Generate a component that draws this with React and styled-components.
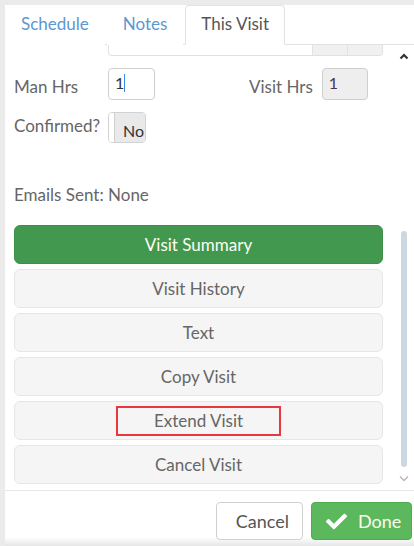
import React from "react";
import styled, { createGlobalStyle } from "styled-components";
import { FaCheck } from "react-icons/fa";

const Global = createGlobalStyle`
  html, body { margin: 0; padding: 0; background: #ebebeb; }
  body { font-family: Lato, "Open Sans", Arial, sans-serif; }
  * { box-sizing: border-box; }
`;

const Frame = styled.div`
  width: 414px;
  height: 546px;
  padding: 5px 0 0 5px;
  background: #ebebeb;
  display: flex;
  flex-direction: column;
  overflow: hidden;
`;

const Dialog = styled.div`
  flex: 1;
  display: flex;
  flex-direction: column;
  background: #fff;
  min-height: 0;
`;

const TabBar = styled.div`
  height: 40px;
  display: flex;
  align-items: flex-end;
  border-bottom: 1px solid #e2e2e2;
  background: #fff;
`;

const Tab = styled.div`
  height: 40px;
  margin-bottom: -1px;
  margin-right: 2px;
  padding: 0 15px 4px;
  display: flex;
  align-items: center;
  font-size: 17px;
  color: ${(p) => (p.$active ? "#555" : "#5b97d3")};
  background: #fff;
  border: 1px solid ${(p) => (p.$active ? "#e2e2e2" : "transparent")};
  border-bottom-color: ${(p) => (p.$active ? "#fff" : "transparent")};
  border-radius: 4px 4px 0 0;
`;

const Body = styled.div`
  height: 446px;
  display: grid;
  grid-template-columns: 1fr 31px;
  padding-left: 9px;
  border-bottom: 1px solid #e6e6e6;
  overflow: hidden;
`;

const Content = styled.div`
  display: flex;
  flex-direction: column;
`;

const ClippedField = styled.div`
  margin-left: 94px;
  height: 11px;
  border: 1px solid #e0e0e0;
  border-top: none;
  border-radius: 0 0 4px 4px;
  display: flex;
  justify-content: flex-end;
  overflow: hidden;
`;

const FieldAddon = styled.div`
  width: 35px;
  background: #f0f0f0;
  border-left: 1px solid #e2e2e2;
`;

const Row = styled.div`
  display: flex;
  align-items: center;
  margin-top: ${(p) => p.$top || 0}px;
`;

const Label = styled.span`
  font-size: 17px;
  color: #666;
  width: ${(p) => (p.$w ? `${p.$w}px` : "auto")};
  margin-left: ${(p) => p.$ml || 0}px;
  align-self: ${(p) => p.$self || "auto"};
  margin-top: ${(p) => p.$mt || 0}px;
`;

const Input = styled.div`
  width: ${(p) => p.$w}px;
  height: 32px;
  border: 1px solid #cfcfcf;
  border-radius: 4px;
  background: ${(p) => (p.$disabled ? "#eee" : "#fff")};
  font-size: 16px;
  color: ${(p) => (p.$disabled ? "#4a3550" : "#333")};
  padding: 4px 0 0 6px;
  margin-left: ${(p) => p.$ml || 0}px;
  display: flex;
  align-items: flex-start;
`;

const Caret = styled.span`
  width: 1px;
  height: 18px;
  margin-top: 1px;
  background: #3b8ee8;
`;

const Toggle = styled.div`
  width: 38px;
  height: 31px;
  border: 1px solid #d2d2d2;
  border-radius: 4px;
  display: flex;
  overflow: hidden;
`;

const ToggleHandle = styled.div`
  width: 6px;
  background: #fff;
  border-right: 1px solid #cfcfcf;
`;

const ToggleLabel = styled.div`
  flex: 1;
  background: #e9e9e9;
  font-size: 16px;
  color: #333;
  display: flex;
  align-items: center;
  justify-content: flex-end;
  padding: 5px 1px 0 0;
  overflow: hidden;
`;

const Emails = styled.div`
  font-size: 17px;
  line-height: 20px;
  color: #666;
  margin-top: 42px;
`;

const ActionList = styled.div`
  display: flex;
  flex-direction: column;
  gap: 5px;
  margin-top: 20px;
`;

const Action = styled.div`
  height: 39px;
  border-radius: 6px;
  border: 1px solid ${(p) => (p.$primary ? "#3f8e4a" : "#e6e6e6")};
  background: ${(p) => (p.$primary ? "#42984f" : "#f5f5f5")};
  color: ${(p) => (p.$primary ? "#fffdf2" : "#666")};
  font-size: 17px;
  display: flex;
  align-items: center;
  justify-content: center;
`;

const Highlight = styled.span`
  display: inline-flex;
  align-items: center;
  justify-content: center;
  height: 30px;
  padding: 0 36px;
  border: 2px solid #e8383d;
`;

const Scrollbar = styled.div`
  display: flex;
  flex-direction: column;
  align-items: center;
  padding-left: 10px;
`;

const Arrow = styled.svg`
  width: 10px;
  height: 7px;
  margin-top: ${(p) => p.$mt}px;
  flex: none;
`;

const Thumb = styled.div`
  width: 6px;
  height: 236px;
  margin-top: 171px;
  border-radius: 3px;
  background: #cdd7e0;
  flex: none;
`;

const Footer = styled.div`
  flex: 1;
  display: flex;
  justify-content: flex-end;
  align-items: flex-start;
  gap: 8px;
  padding: 11px 2px 0 0;
  background: linear-gradient(to bottom, #fff 0%, #fff 84%, #e6e6e6 100%);
`;

const FooterButton = styled.div`
  height: 38px;
  width: ${(p) => p.$w}px;
  border-radius: 4px;
  border: 1px solid ${(p) => (p.$primary ? "#4cae4c" : "#cfcfcf")};
  background: ${(p) => (p.$primary ? "#5cb85c" : "#fff")};
  color: ${(p) => (p.$primary ? "#fffdf0" : "#555")};
  font-size: 18px;
  display: flex;
  align-items: center;
  justify-content: ${(p) => (p.$primary ? "flex-start" : "flex-end")};
  gap: 11px;
  padding: ${(p) => (p.$primary ? "0 0 0 14px" : "0 13px 0 0")};
`;

const actions = ["Visit History", "Text", "Copy Visit", "Extend Visit", "Cancel Visit"];

export default function App() {
  return (
    <Frame>
      <Global />
      <Dialog>
        <TabBar>
          <Tab>Schedule</Tab>
          <Tab>Notes</Tab>
          <Tab $active>This Visit</Tab>
        </TabBar>
        <Body>
          <Content>
            <ClippedField>
              <FieldAddon />
              <FieldAddon />
            </ClippedField>
            <Row $top={12}>
              <Label $w={94} $mt={4}>Man Hrs</Label>
              <Input $w={47}>
                1<Caret />
              </Input>
              <Label $ml={94} $mt={4}>Visit Hrs</Label>
              <Input $w={46} $ml={9} $disabled>
                1
              </Input>
            </Row>
            <Row $top={12}>
              <Label $w={94} $self="flex-start" $mt={3}>Confirmed?</Label>
              <Toggle>
                <ToggleHandle />
                <ToggleLabel>No</ToggleLabel>
              </Toggle>
            </Row>
            <Emails>Emails Sent: None</Emails>
            <ActionList>
              <Action $primary>Visit Summary</Action>
              {actions.map((a) => (
                <Action key={a}>
                  {a === "Extend Visit" ? <Highlight>{a}</Highlight> : a}
                </Action>
              ))}
            </ActionList>
          </Content>
          <Scrollbar>
            <Arrow $mt={8} viewBox="0 0 10 7">
              <polyline points="1.5,5.5 5,2 8.5,5.5" fill="none" stroke="#333" strokeWidth="2.2" />
            </Arrow>
            <Thumb />
            <Arrow $mt={8} viewBox="0 0 10 7">
              <polyline points="1,1.5 5,5.5 9,1.5" fill="none" stroke="#b5b5b5" strokeWidth="1.3" />
            </Arrow>
          </Scrollbar>
        </Body>
        <Footer>
          <FooterButton $w={87}>Cancel</FooterButton>
          <FooterButton $w={101} $primary>
            <FaCheck size={21} color="#fff" />
            Done
          </FooterButton>
        </Footer>
      </Dialog>
    </Frame>
  );
}
